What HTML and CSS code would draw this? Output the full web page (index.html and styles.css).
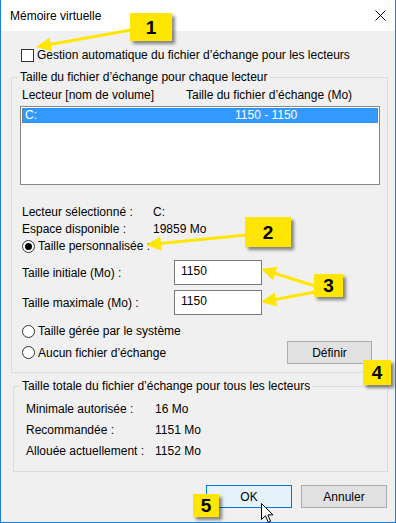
FILE: index.html
```html
<!DOCTYPE html>
<html lang="fr">
<head>
<meta charset="utf-8">
<title>Mémoire virtuelle</title>
<link rel="stylesheet" href="styles.css">
</head>
<body>
<div class="screen">
  <div class="window">
    <div class="titlebar">
      <span class="title">Mémoire virtuelle</span>
      <span class="close">
        <svg width="11" height="11" viewBox="0 0 11 11"><path d="M0.5 0.5 L10.5 10.5 M10.5 0.5 L0.5 10.5" stroke="#000" stroke-width="1" fill="none"/></svg>
      </span>
    </div>
    <div class="content">
      <div class="check-row"><span class="checkbox"></span><span>Gestion automatique du fichier d’échange pour les lecteurs</span></div>

      <fieldset class="group group-drives">
        <legend>Taille du fichier d’échange pour chaque lecteur</legend>
        <div class="list-head"><span class="col-drive">Lecteur [nom de volume]</span><span>Taille du fichier d’échange (Mo)</span></div>
        <div class="listbox">
          <div class="list-row selected"><span class="col-c">C:</span><span>1150 - 1150</span></div>
        </div>
        <div class="info-row first"><span class="info-label">Lecteur sélectionné :</span><span>C:</span></div>
        <div class="info-row"><span class="info-label">Espace disponible :</span><span>19859 Mo</span></div>
        <div class="radio-row custom"><span class="radio checked"></span><span>Taille personnalisée :</span></div>
        <div class="field-row first"><span class="field-label">Taille initiale (Mo) :</span><span class="input">1150</span></div>
        <div class="field-row second"><span class="field-label">Taille maximale (Mo) :</span><span class="input">1150</span></div>
        <div class="radio-row system"><span class="radio"></span><span>Taille gérée par le système</span></div>
        <div class="define-row">
          <div class="radio-row"><span class="radio"></span><span>Aucun fichier d’échange</span></div>
          <span class="btn define">Définir</span>
        </div>
      </fieldset>

      <fieldset class="group group-total">
        <legend>Taille totale du fichier d’échange pour tous les lecteurs</legend>
        <div class="total-row first"><span class="total-label">Minimale autorisée :</span><span>16 Mo</span></div>
        <div class="total-row"><span class="total-label">Recommandée :</span><span>1151 Mo</span></div>
        <div class="total-row"><span class="total-label">Allouée actuellement :</span><span>1152 Mo</span></div>
      </fieldset>

      <div class="buttons">
        <span class="btn primary">OK</span>
        <span class="btn">Annuler</span>
      </div>
    </div>
  </div>

  <svg class="arrows" width="396" height="523" viewBox="0 0 396 523">
    <g stroke="#ffe600" stroke-width="3" fill="none" stroke-linecap="round">
      <line x1="131" y1="30" x2="50" y2="44.5"/>
      <line x1="246" y1="235" x2="160" y2="243.5"/>
      <line x1="315" y1="286" x2="275" y2="273.5"/>
      <line x1="315" y1="292" x2="275" y2="299.5"/>
    </g>
    <g fill="#ffe600">
      <polygon points="36,47 52,51.3 49.6,37.5"/>
      <polygon points="146,245 161.6,250.5 160.2,236.5"/>
      <polygon points="261,269 277.4,266.8 273.2,280.2"/>
      <polygon points="261,302 277,306.4 274.7,292.6"/>
    </g>
  </svg>

  <div class="badge b1">1</div>
  <div class="badge b2">2</div>
  <div class="badge b3">3</div>
  <div class="badge b4">4</div>
  <div class="badge b5">5</div>

  <svg class="cursor" width="14" height="22" viewBox="0 0 14 22">
    <path d="M0.5 0.5 L0.5 16.5 L4.5 12.7 L7.3 19.3 L9.6 18.3 L6.9 11.9 L12 11.9 Z" fill="#fff" stroke="#000" stroke-width="1" stroke-linejoin="miter"/>
  </svg>
</div>
</body>
</html>
```

FILE: styles.css
```css
* { box-sizing: border-box; }

body {
  margin: 0;
  font-family: "Liberation Sans", Arial, sans-serif;
  font-size: 12px;
  line-height: 16px;
  color: #000;
  background: #fff;
}

.screen {
  position: relative;
  width: 396px;
  height: 523px;
}

.window {
  width: 396px;
  height: 523px;
  border: 1px solid #1a82d6;
  border-top: 0;
  background: #f0f0f0;
  display: flex;
  flex-direction: column;
  overflow: hidden;
}

.titlebar {
  height: 31px;
  flex: none;
  background: #fff;
  display: flex;
  align-items: center;
  justify-content: space-between;
  padding-left: 9px;
}

.close {
  width: 30px;
  height: 31px;
  display: flex;
  align-items: center;
  justify-content: center;
}

.content {
  flex: 1;
  padding: 16px 7px 0 10px;
  display: flex;
  flex-direction: column;
}

.check-row {
  display: flex;
  align-items: center;
  gap: 3px;
  height: 16px;
  margin-left: 10px;
}

.checkbox {
  width: 13px;
  height: 13px;
  border: 1px solid #333;
  background: #fff;
  flex: none;
}

.group {
  margin: 6px 0 0;
  padding: 0 7px 8px 8px;
  border: 1px solid #dcdcdc;
  min-width: 0;
}

.group legend {
  padding: 0 2px;
  margin-left: -2px;
  line-height: 16px;
}

.list-head {
  display: flex;
  height: 16px;
  margin-top: 2px;
  padding-left: 2px;
}

.col-drive { width: 164px; }

.listbox {
  margin-top: 3px;
  width: 360px;
  height: 79px;
  border: 1px solid #828790;
  background: #fff;
  padding: 1px;
}

.list-row {
  height: 15px;
  display: flex;
  align-items: center;
  padding-left: 2px;
  line-height: 13px;
}

.list-row.selected {
  background: #3399ff;
  color: #fff;
  border: 1px dotted #a8702e;
}

.col-c { width: 210px; }

.info-row {
  display: flex;
  align-items: center;
  height: 17px;
  padding-left: 2px;
}

.info-row.first { margin-top: 18px; }

.info-label { width: 131px; }

.radio-row {
  display: flex;
  align-items: center;
  gap: 3px;
  height: 16px;
  padding-left: 2px;
}

.radio-row.custom { margin-top: 1px; }
.radio-row.system { margin-top: 8px; }

.radio {
  width: 13px;
  height: 13px;
  border-radius: 50%;
  border: 1px solid #333;
  background: #fff;
  flex: none;
  display: flex;
  align-items: center;
  justify-content: center;
}

.radio.checked::after {
  content: "";
  width: 7px;
  height: 7px;
  border-radius: 50%;
  background: #000;
}

.field-row {
  display: flex;
  align-items: center;
  height: 25px;
  padding-left: 2px;
}

.field-row.first { margin-top: 6px; }
.field-row.second { margin-top: 5px; }

.field-label { width: 152px; }

.input {
  width: 88px;
  height: 25px;
  border: 1px solid #7a7a7a;
  background: #fff;
  padding: 2px 6px;
  line-height: 16px;
}

.define-row {
  display: flex;
  align-items: center;
  justify-content: space-between;
  height: 23px;
  margin-top: 2px;
}

.btn {
  display: flex;
  align-items: center;
  justify-content: center;
  width: 86px;
  height: 23px;
  background: #e1e1e1;
  border: 1px solid #adadad;
}

.btn.define {
  width: 85px;
  margin-right: 8px;
}

.btn.primary {
  background: #e5f1fb;
  border-color: #0078d7;
}

.group-total {
  margin: 5px 0 0 2px;
  padding: 0 7px 12px 8px;
}

.total-row {
  display: flex;
  align-items: center;
  height: 16px;
  padding-left: 4px;
  margin-top: 5px;
}

.total-row.first { margin-top: 7px; }

.total-label { width: 129px; }

.buttons {
  display: flex;
  justify-content: flex-end;
  gap: 9px;
  margin-top: 13px;
  padding-right: 1px;
}

/* annotation overlay */
.arrows {
  position: absolute;
  left: 0;
  top: 0;
  pointer-events: none;
}

.badge {
  position: absolute;
  background: #ffe600;
  box-shadow: 3px 3px 3px rgba(0, 0, 0, 0.45);
  font-family: "Liberation Sans", Arial, sans-serif;
  font-weight: bold;
  font-size: 19px;
  line-height: 1;
  display: flex;
  align-items: center;
  justify-content: center;
  color: #000;
}

.b1 { left: 130px; top: 13px; width: 42px; height: 28px; }
.b2 { left: 245px; top: 217px; width: 46px; height: 30px; }
.b3 { left: 314px; top: 274px; width: 29px; height: 23px; }
.b4 { left: 363px; top: 360px; width: 28px; height: 25px; }
.b5 { left: 193px; top: 494px; width: 26px; height: 23px; }

.cursor {
  position: absolute;
  left: 261px;
  top: 503px;
}
```
